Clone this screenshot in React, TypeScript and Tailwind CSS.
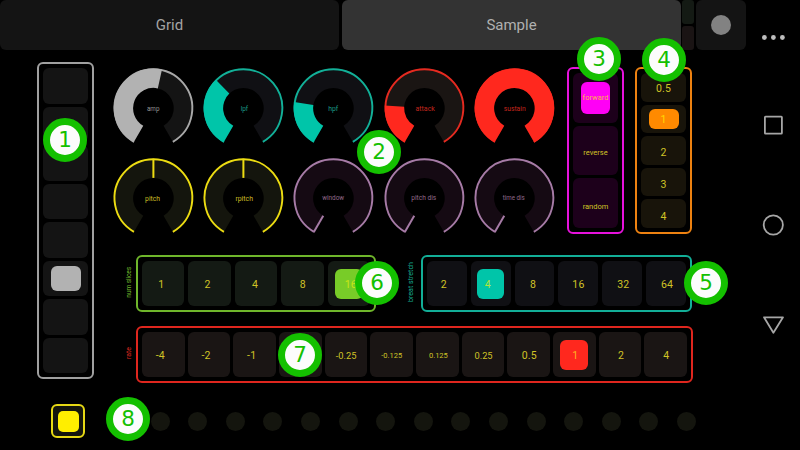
import React from "react";

type CellItem = { label?: string; shift?: string; size?: string; on?: boolean };

type StripProps = {
  items: CellItem[];
  vertical?: boolean;
  frame: string;
  cell: string;
  knob: string;
  text?: string;
  onText?: string;
};

/* A bordered selector holding one pad per option, with a knob on the active pad. */
function Strip({ items, vertical, frame, cell, knob, text = "text-[#d0c326]", onText = "" }: StripProps) {
  return (
    <div className={`flex shrink-0 rounded-[6px] border-2 p-1 ${vertical ? "flex-col" : "flex-row"} ${frame}`}>
      {items.map((item, i) => (
        <div key={i} className={`grid min-h-0 min-w-0 flex-1 place-items-center rounded-[6px] ${cell}`}>
          {item.on && <span className={`col-start-1 row-start-1 rounded-[6px] ${knob}`} />}
          {item.label && (
            <span
              className={`col-start-1 row-start-1 whitespace-nowrap leading-none ${item.on ? onText : text} ${item.size ?? "text-[10.5px] tracking-[0.2px]"} ${item.shift ?? ""}`}
            >
              {item.label}
            </span>
          )}
        </div>
      ))}
    </div>
  );
}

function polar(r: number, deg: number): string {
  const a = (deg * Math.PI) / 180;
  return `${(45.4 + r * Math.sin(a)).toFixed(2)} ${(45.2 - r * Math.cos(a)).toFixed(2)}`;
}

function ring(from: number, to: number): string {
  const large = to - from > 180 ? 1 : 0;
  return `M${polar(39.7, from)}A39.7 39.7 0 ${large} 1 ${polar(39.7, to)}L${polar(20.3, to)}A20.3 20.3 0 ${large} 0 ${polar(20.3, from)}Z`;
}

type DialProps = {
  label: string;
  width: number;
  color: string;
  line: string;
  track: string;
  text: string;
  value?: number;
  needle?: number;
  dy?: number;
  dx?: number;
};

/* Rotary control: angles are measured clockwise from twelve o'clock. */
function Dial({ label, width, color, line, track, text, value, needle, dx = 0, dy = 0 }: DialProps) {
  return (
    <svg viewBox="0 0 90 90" className="h-[90px] w-[90px]">
      <path d={ring(-150, 150)} fill={track} />
      <path d={`M${polar(38.9, -150)}A38.9 38.9 0 1 1 ${polar(38.9, 150)}`} fill="none" stroke={line} strokeWidth="1.9" />
      {value !== undefined && <path d={ring(-150, value)} fill={color} />}
      {needle !== undefined && (
        <path d={`M${polar(20.3, needle)}L${polar(39.4, needle)}`} stroke={line} strokeWidth="2" />
      )}
      <text x={45.2 + dx} y={48 + dy} textAnchor="middle" fontSize="7" fill={text} textLength={width} lengthAdjust="spacingAndGlyphs">
        {label}
      </text>
    </svg>
  );
}

const teal = { color: "#00c5a9", line: "#12b098", track: "#101014", text: "#1a9c87" };
const red = { color: "#ff281e", line: "#e52a20", track: "#1a1513", text: "#c2261d" };
const yellow = { color: "#fff000", line: "#ecdc12", track: "#14150d", text: "#cdbf24" };
const purple = { color: "#a67ba6", line: "#a67ba6", track: "#150a13", text: "#91698a" };

const dials: DialProps[] = [
  { label: "amp", width: 12.5, color: "#b2b2b2", line: "#a8a8a8", track: "#141414", text: "#959595", value: 12.5 },
  { label: "lpf", width: 7.5, ...teal, value: -44, dx: 1.2 },
  { label: "hpf", width: 10, ...teal, value: -81 },
  { label: "attack", width: 19.5, ...red, value: -86, dx: 1 },
  { label: "sustain", width: 22, ...red, value: 150, dx: 0.5 },
  { label: "pitch", width: 15, ...yellow, needle: 0, dx: -0.6 },
  { label: "rpitch", width: 17.5, ...yellow, needle: 0, dx: 1 },
  { label: "window", width: 22, ...purple, needle: -150, dy: -1 },
  { label: "pitch dis", width: 25, ...purple, needle: -150, dy: -1, dx: -0.5 },
  { label: "time dis", width: 22, ...purple, needle: -150, dy: -1, dx: -0.5 },
];

const faders: CellItem[] = [{}, {}, {}, {}, {}, { on: true }, {}, {}];

const modes: CellItem[] = [
  { label: "forward", on: true, size: "text-[7.5px]" },
  { label: "reverse", size: "text-[7.5px]", shift: "translate-y-[2px]" },
  { label: "random", size: "text-[7.5px]", shift: "translate-y-[4px]" },
];

const lengths: CellItem[] = [
  { label: "0.5", shift: "translate-y-[2px]" },
  { label: "1", on: true, shift: "translate-y-px" },
  { label: "2", shift: "translate-y-[3px]" },
  { label: "3", shift: "translate-y-[3px]" },
  { label: "4", shift: "translate-y-[4px]" },
];

const slices: CellItem[] = [
  { label: "1", shift: "-translate-x-[2px] translate-y-[2px]" },
  { label: "2", shift: "-translate-x-[2px] translate-y-[2px]" },
  { label: "4", shift: "-translate-x-px translate-y-[2px]" },
  { label: "8", shift: "translate-x-[0.5px] translate-y-[2px]" },
  { label: "16", on: true, shift: "translate-x-[2px] translate-y-[2px]" },
];

const stretch: CellItem[] = [
  { label: "2", shift: "-translate-x-[3px] translate-y-[2px]" },
  { label: "4", on: true, shift: "-translate-x-[3px] translate-y-[2px]" },
  { label: "8", shift: "-translate-x-[1.5px] translate-y-[2px]" },
  { label: "16", shift: "translate-y-[2px]" },
  { label: "32", shift: "translate-x-px translate-y-[2px]" },
  { label: "64", shift: "translate-x-px translate-y-[2px]" },
];

const rates: CellItem[] = [
  { label: "-4", shift: "-translate-x-[3px] translate-y-[2px]" },
  { label: "-2", shift: "-translate-x-[3px] translate-y-[2px]" },
  { label: "-1", shift: "-translate-x-[3px] translate-y-[2px]" },
  {},
  { label: "-0.25", size: "text-[9.3px]", shift: "translate-y-px" },
  { label: "-0.125", size: "text-[7.5px]", shift: "translate-y-px" },
  { label: "0.125", size: "text-[7.5px]", shift: "translate-x-px translate-y-px" },
  { label: "0.25", size: "text-[9.3px]", shift: "translate-x-[0.5px] translate-y-px" },
  { label: "0.5", shift: "translate-x-[0.5px] translate-y-[2px]" },
  { label: "1", on: true, shift: "translate-x-px translate-y-[2px]" },
  { label: "2", shift: "translate-x-px translate-y-[2px]" },
  { label: "4", shift: "translate-x-[0.5px] translate-y-[2px]" },
];

const badges = [
  { n: 1, place: "left-[43px] top-[118px]" },
  { n: 2, place: "left-[357px] top-[130px]" },
  { n: 3, place: "left-[577px] top-[37px]" },
  { n: 4, place: "left-[642px] top-[38px]" },
  { n: 5, place: "left-[684px] top-[261px]" },
  { n: 6, place: "left-[355px] top-[261px]" },
  { n: 7, place: "left-[278px] top-[333px]" },
  { n: 8, place: "left-[106px] top-[397px]" },
];

function SideLabel({ children, tone }: { children: string; tone: string }) {
  return (
    <div className="flex w-3 shrink-0 items-center justify-center pr-[2px]">
      <span className={`rotate-180 whitespace-nowrap leading-none [writing-mode:vertical-rl] ${tone}`}>{children}</span>
    </div>
  );
}

export default function App() {
  return (
    <div className="relative flex h-[450px] w-[800px] overflow-hidden bg-black font-['Roboto',sans-serif]">
      <main className="flex w-[746px] flex-col">
        <header className="flex h-[50px] shrink-0 text-[15px] text-[#a3a3a3]">
          <div className="flex w-[339px] items-center justify-center rounded-[6px] bg-[#141414]">Grid</div>
          <div className="ml-[3px] flex w-[339px] items-center justify-center rounded-[6px] bg-[#333333] text-[#b0b0b0]">Sample</div>
          <div className="ml-px flex w-3 flex-col gap-[2px]">
            <div className="flex-1 rounded-[3px] bg-[#141a14]" />
            <div className="flex-1 rounded-[3px] bg-[#1a1414]" />
          </div>
          <div className="ml-[2px] flex w-[50px] items-center justify-center rounded-[6px] bg-[#141414]">
            <div className="size-5 rounded-full bg-[#828282]" />
          </div>
        </header>

        <div className="flex h-[335px] shrink-0">
          <div className="flex pl-[37px] pt-3">
            <Strip items={faders} vertical frame="h-[317px] w-[57px] gap-[3px] border-[#a0a0a0]" cell="bg-[#141414]" knob="h-[25px] w-[30px] bg-[#b2b2b2]" />
          </div>

          <div className="flex flex-col">
            <div className="flex h-[205px] pl-[14px]">
              <div className="mt-[13px] grid h-[180px] w-[451px] grid-cols-5 justify-items-center">
                {dials.map((d) => (
                  <Dial key={d.label} {...d} />
                ))}
              </div>
              <div className="ml-2 mt-[17px] flex h-[167px] gap-[11px]">
                <Strip items={modes} vertical frame="w-[57px] gap-[3px] border-[#e612dc]" cell="bg-[#1d001b]" knob="h-8 w-[29px] bg-[#ff00f6]" onText="text-[#ffb04a]" />
                <Strip items={lengths} vertical frame="w-[57px] gap-[3px] border-[#ee8211]" cell="bg-[#18140a]" knob="h-5 w-[30px] bg-[#ff8a00]" onText="text-[#ffd800]" />
              </div>
            </div>

            <div className="flex h-[57px] pl-[30px]">
              <div className="flex pb-[3px] text-[6.6px] tracking-[-0.1px]">
                <SideLabel tone="text-[#70b82c]">num slices</SideLabel>
              </div>
              <Strip items={slices} frame="w-[240px] gap-1 border-[#6fb62b]" cell="bg-[#141a14]" knob="h-[30px] w-7 bg-[#78cc28]" onText="text-[#c8e614]" />
              <div className="ml-[30px] mr-[3px] flex pb-[3px] text-[7.1px]">
                <SideLabel tone="text-[#16aa94]">breat stretch</SideLabel>
              </div>
              <Strip items={stretch} frame="w-[271px] gap-1 border-[#12ae97]" cell="bg-[#101014]" knob="h-[30px] w-[27px] bg-[#00c5a9]" onText="text-[#b4e43c]" />
            </div>

            <div className="mt-[14px] flex h-[57px] pl-[30px]">
              <div className="flex pb-[3px] text-[7px]">
                <SideLabel tone="text-[#e02a20]">rate</SideLabel>
              </div>
              <Strip items={rates} frame="w-[557px] gap-[3px] border-[#df261e]" cell="bg-[#1a1514]" knob="h-[30px] w-7 bg-[#ff281e]" onText="text-[#ffb020]" />
            </div>
          </div>
        </div>

        <footer className="flex pl-[51px] pt-[19px]">
          <div className="flex size-[34px] items-center justify-center rounded-[6px] border-2 border-[#e6d814] bg-[#14150d]">
            <div className="size-[21px] rounded-[5px] bg-[#ffee00]" />
          </div>
          <div className="ml-[28px] flex w-[583px] items-center justify-between">
            {Array.from({ length: 16 }, (_, i) => (
              <div key={i} className="size-[19px] rounded-full bg-[#14150e]" />
            ))}
          </div>
        </footer>
      </main>

      <nav className="flex w-[54px] flex-col items-center">
        <svg viewBox="0 0 54 450" className="h-[450px] w-[54px]" fill="none" stroke="#a6a6a6" strokeWidth="1.8" strokeLinejoin="round">
          <g fill="#bdbdbd" stroke="none">
            <circle cx="18.4" cy="37.5" r="2.4" />
            <circle cx="27.4" cy="37.5" r="2.4" />
            <circle cx="36.4" cy="37.5" r="2.4" />
          </g>
          <rect x="18.9" y="116.6" width="17" height="17" rx="0.6" />
          <circle cx="27.3" cy="225" r="9.6" />
          <path d="M18 317.3h19L27.4 332.8Z" />
        </svg>
      </nav>

      {badges.map((b) => (
        <div
          key={b.n}
          className={`absolute flex size-11 items-center justify-center rounded-full border-[7px] border-[#14c000] bg-[#fcfcfc] font-['DejaVu_Sans',sans-serif] text-[21.5px] leading-none text-[#14c000] ${b.place}`}
        >
          {b.n}
        </div>
      ))}
    </div>
  );
}
